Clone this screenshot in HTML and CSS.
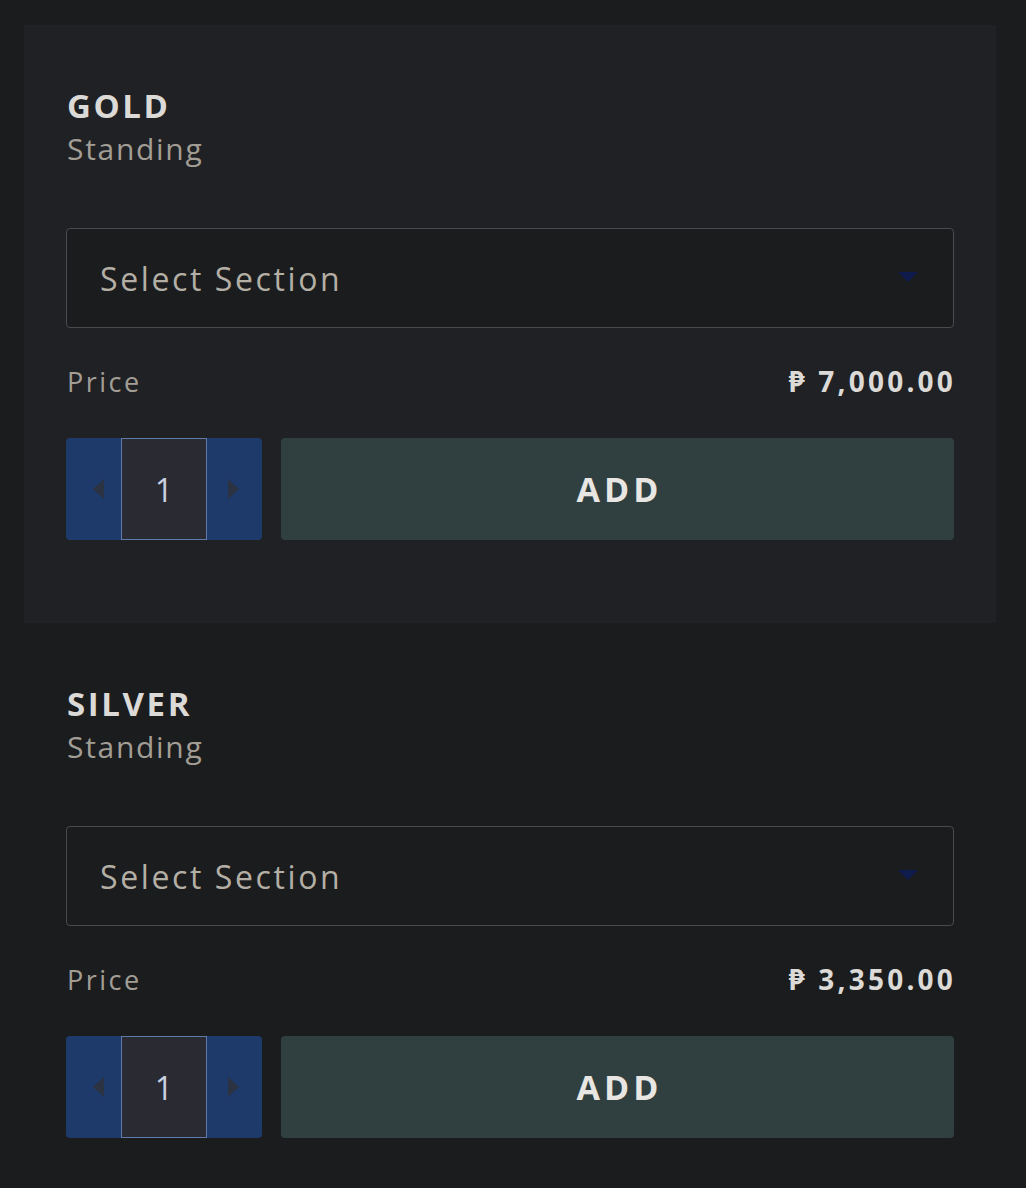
FILE: index.html
```html
<!DOCTYPE html>
<html>
<head>
<meta charset="utf-8">
<link rel="stylesheet" href="styles.css">
</head>
<body>
<div class="list">
  <section class="ticket ticket--active">
    <h2 class="tier">GOLD</h2>
    <div class="kind">Standing</div>
    <div class="select">
      <span class="select-text">Select Section</span>
      <span class="caret"></span>
    </div>
    <div class="price-row">
      <span class="price-label">Price</span>
      <span class="price-value">₱ 7,000.00</span>
    </div>
    <div class="controls">
      <div class="stepper">
        <span class="step step--left"><span class="tri tri--left"></span></span>
        <span class="qty">1</span>
        <span class="step step--right"><span class="tri tri--right"></span></span>
      </div>
      <button class="add">ADD</button>
    </div>
  </section>
  <section class="ticket">
    <h2 class="tier">SILVER</h2>
    <div class="kind">Standing</div>
    <div class="select">
      <span class="select-text">Select Section</span>
      <span class="caret"></span>
    </div>
    <div class="price-row">
      <span class="price-label">Price</span>
      <span class="price-value">₱ 3,350.00</span>
    </div>
    <div class="controls">
      <div class="stepper">
        <span class="step step--left"><span class="tri tri--left"></span></span>
        <span class="qty">1</span>
        <span class="step step--right"><span class="tri tri--right"></span></span>
      </div>
      <button class="add">ADD</button>
    </div>
  </section>
</div>
</body>
</html>
```
FILE: styles.css
```css
html, body {
  margin: 0;
  padding: 0;
  background: #1b1c1e;
  font-family: "Open Sans", "Noto Sans", sans-serif;
}
.list {
  margin: 25px 30px 0 24px;
  display: flex;
  flex-direction: column;
}
.ticket {
  padding: 61px 42px 83px 42px;
  display: flex;
  flex-direction: column;
}
.ticket--active {
  background: #202124;
}
.tier {
  margin: 0 0 0 1px;
  font-size: 33px;
  line-height: 40px;
  font-weight: 700;
  letter-spacing: 2.6px;
  color: #dcdad6;
}
.kind {
  margin: 1px 0 0 1px;
  font-size: 30px;
  line-height: 44px;
  letter-spacing: 1.7px;
  color: #a29e95;
}
.select {
  margin-top: 57px;
  height: 98px;
  border: 1px solid #4a4b4e;
  border-radius: 4px;
  background: #1b1c1e;
  display: flex;
  align-items: center;
  justify-content: space-between;
  padding: 0 35px 0 33px;
}
.select-text {
  font-size: 32px;
  letter-spacing: 2.6px;
  color: #b4afa5;
}
.caret {
  width: 0;
  height: 0;
  border-left: 10px solid transparent;
  border-right: 10px solid transparent;
  border-top: 10px solid #0f1b4d;
  margin-top: -2px;
}
.price-row {
  display: flex;
  justify-content: space-between;
  align-items: center;
  height: 106px;
  padding-bottom: 4px;
  margin: 0 0 0 1px;
}
.price-label {
  font-size: 27px;
  letter-spacing: 2.5px;
  color: #a29e95;
}
.price-value {
  font-size: 28px;
  font-weight: 700;
  letter-spacing: 3.2px;
  margin-right: -2px;
  color: #dcdad6;
}
.controls {
  display: flex;
  gap: 19px;
  height: 102px;
}
.stepper {
  width: 196px;
  flex: none;
  background: #1e3a6a;
  border-radius: 4px;
  display: flex;
  align-items: stretch;
}
.step {
  flex: 1;
  display: flex;
  align-items: center;
  justify-content: center;
}
.tri {
  width: 0;
  height: 0;
  border-top: 10px solid transparent;
  border-bottom: 10px solid transparent;
}
.tri--left {
  border-right: 11px solid #2b3242;
  margin-left: 10px;
}
.tri--right {
  border-left: 11px solid #2b3242;
  margin-right: 2px;
}
.qty {
  width: 84px;
  border: 1px solid #5f7bab;
  background: #2a2a33;
  display: flex;
  align-items: center;
  justify-content: center;
  font-size: 32px;
  color: #c9d0e0;
}
.add {
  flex: 1;
  border: 0;
  border-radius: 4px;
  background: #303f3f;
  color: #e8e6e2;
  font-family: inherit;
  font-size: 34px;
  font-weight: 700;
  letter-spacing: 4px;
  text-indent: 4px;
  cursor: pointer;
}
```
